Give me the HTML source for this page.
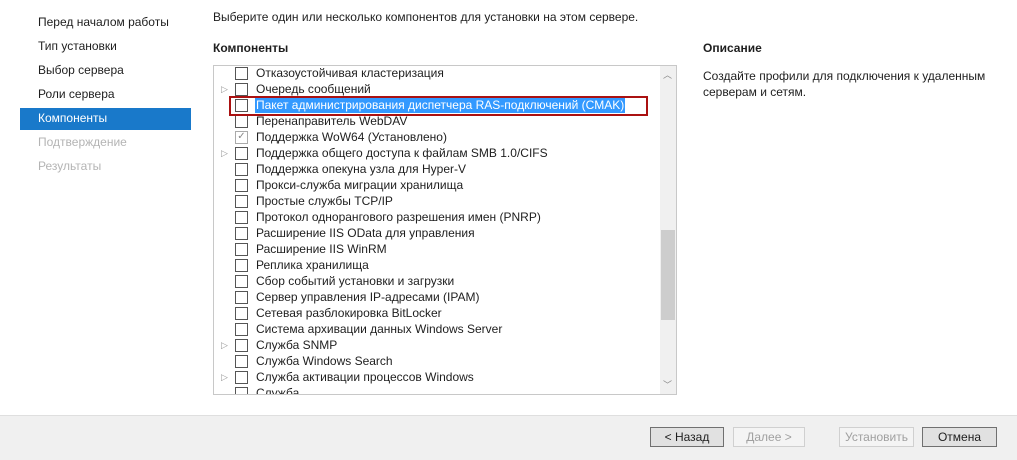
<!DOCTYPE html><html><head><meta charset="utf-8"><style>
body{margin:0;width:1017px;height:459px;background:#fff;font-family:"Liberation Sans",sans-serif;font-size:12px;color:#1e1e1e;position:relative;overflow:hidden}
.a{position:absolute;white-space:nowrap}
.nav{left:38px}
.box{left:213px;top:65px;width:464px;height:330px;border:1px solid #c8c8c8;box-sizing:border-box;overflow:hidden}
.row{position:absolute;left:0;height:16px;line-height:16px}
.cb{position:absolute;left:21px;top:2px;width:11px;height:11px;border:1px solid #555;background:#fff}
.tx{position:absolute;left:42px;white-space:nowrap}
.ar{position:absolute;left:7px;top:0;color:#999;font-size:9px}
.btn{position:absolute;top:427px;height:20px;border:1px solid #adadad;background:#e1e1e1;box-sizing:border-box;text-align:center;line-height:18px}
</style></head><body>
<div class="a nav" style="top:15px">Перед началом работы</div>
<div class="a nav" style="top:39px">Тип установки</div>
<div class="a nav" style="top:63px">Выбор сервера</div>
<div class="a nav" style="top:87px">Роли сервера</div>
<div class="a" style="left:20px;top:108px;width:171px;height:22px;background:#1979ca"></div>
<div class="a nav" style="top:111px;color:#fff">Компоненты</div>
<div class="a nav" style="top:135px;color:#b4b4b4">Подтверждение</div>
<div class="a nav" style="top:159px;color:#b4b4b4">Результаты</div>
<div class="a" style="left:213px;top:10px">Выберите один или несколько компонентов для установки на этом сервере.</div>
<div class="a" style="left:213px;top:41px;font-weight:bold">Компоненты</div>
<div class="a" style="left:703px;top:41px;font-weight:bold">Описание</div>
<div class="a" style="left:703px;top:68px;line-height:16px">Создайте профили для подключения к удаленным<br>серверам и сетям.</div>
<div class="a box">
<div class="row" style="top:0">&nbsp;</div>
</div>
<div class="a" style="left:214px;top:66px;width:446px;height:328px;overflow:hidden">
<div style="position:relative;top:-1px">
<div class="row" style="top:0"><span class="cb"></span><span class="tx">Отказоустойчивая кластеризация</span></div>
<div class="row" style="top:16px"><span class="ar">▷</span><span class="cb"></span><span class="tx">Очередь сообщений</span></div>
<div class="row" style="top:32px"><span class="cb"></span><span class="tx" style="background:#3399ff;color:#fff;padding:0 1px;left:41px">Пакет администрирования диспетчера RAS-подключений (CMAK)</span></div>
<div class="row" style="top:48px"><span class="cb"></span><span class="tx">Перенаправитель WebDAV</span></div>
<div class="row" style="top:64px"><span class="cb" style="border-color:#aaa;color:#888;font-size:10px;line-height:10px;text-align:center">✓</span><span class="tx">Поддержка WoW64 (Установлено)</span></div>
<div class="row" style="top:80px"><span class="ar">▷</span><span class="cb"></span><span class="tx">Поддержка общего доступа к файлам SMB 1.0/CIFS</span></div>
<div class="row" style="top:96px"><span class="cb"></span><span class="tx">Поддержка опекуна узла для Hyper-V</span></div>
<div class="row" style="top:112px"><span class="cb"></span><span class="tx">Прокси-служба миграции хранилища</span></div>
<div class="row" style="top:128px"><span class="cb"></span><span class="tx">Простые службы TCP/IP</span></div>
<div class="row" style="top:144px"><span class="cb"></span><span class="tx">Протокол однорангового разрешения имен (PNRP)</span></div>
<div class="row" style="top:160px"><span class="cb"></span><span class="tx">Расширение IIS OData для управления</span></div>
<div class="row" style="top:176px"><span class="cb"></span><span class="tx">Расширение IIS WinRM</span></div>
<div class="row" style="top:192px"><span class="cb"></span><span class="tx">Реплика хранилища</span></div>
<div class="row" style="top:208px"><span class="cb"></span><span class="tx">Сбор событий установки и загрузки</span></div>
<div class="row" style="top:224px"><span class="cb"></span><span class="tx">Сервер управления IP-адресами (IPAM)</span></div>
<div class="row" style="top:240px"><span class="cb"></span><span class="tx">Сетевая разблокировка BitLocker</span></div>
<div class="row" style="top:256px"><span class="cb"></span><span class="tx">Система архивации данных Windows Server</span></div>
<div class="row" style="top:272px"><span class="ar">▷</span><span class="cb"></span><span class="tx">Служба SNMP</span></div>
<div class="row" style="top:288px"><span class="cb"></span><span class="tx">Служба Windows Search</span></div>
<div class="row" style="top:304px"><span class="ar">▷</span><span class="cb"></span><span class="tx">Служба активации процессов Windows</span></div>
<div class="row" style="top:320px"><span class="cb"></span><span class="tx">Служба ...</span></div>
</div></div>
<div class="a" style="left:229px;top:96px;width:419px;height:20px;border:2px solid #a11;box-sizing:border-box"></div>
<div class="a" style="left:660px;top:66px;width:16px;height:328px;background:#f0f0f0"></div>
<div class="a" style="left:661px;top:230px;width:14px;height:90px;background:#cdcdcd"></div>
<div class="a" style="left:663px;top:68px;color:#888;font-size:9px">︿</div>
<div class="a" style="left:663px;top:378px;color:#888;font-size:9px">﹀</div>
<div class="a" style="left:0;top:415px;width:1017px;height:44px;background:#f0f0f0;border-top:1px solid #dfdfdf"></div>
<div class="btn" style="left:650px;width:74px;border-color:#707070">&lt; Назад</div>
<div class="btn" style="left:733px;width:72px;background:#f4f4f4;border-color:#d0d0d0;color:#a0a0a0">Далее &gt;</div>
<div class="btn" style="left:839px;width:75px;background:#f4f4f4;border-color:#d0d0d0;color:#a0a0a0">Установить</div>
<div class="btn" style="left:922px;width:75px;border-color:#707070">Отмена</div>
</body></html>
